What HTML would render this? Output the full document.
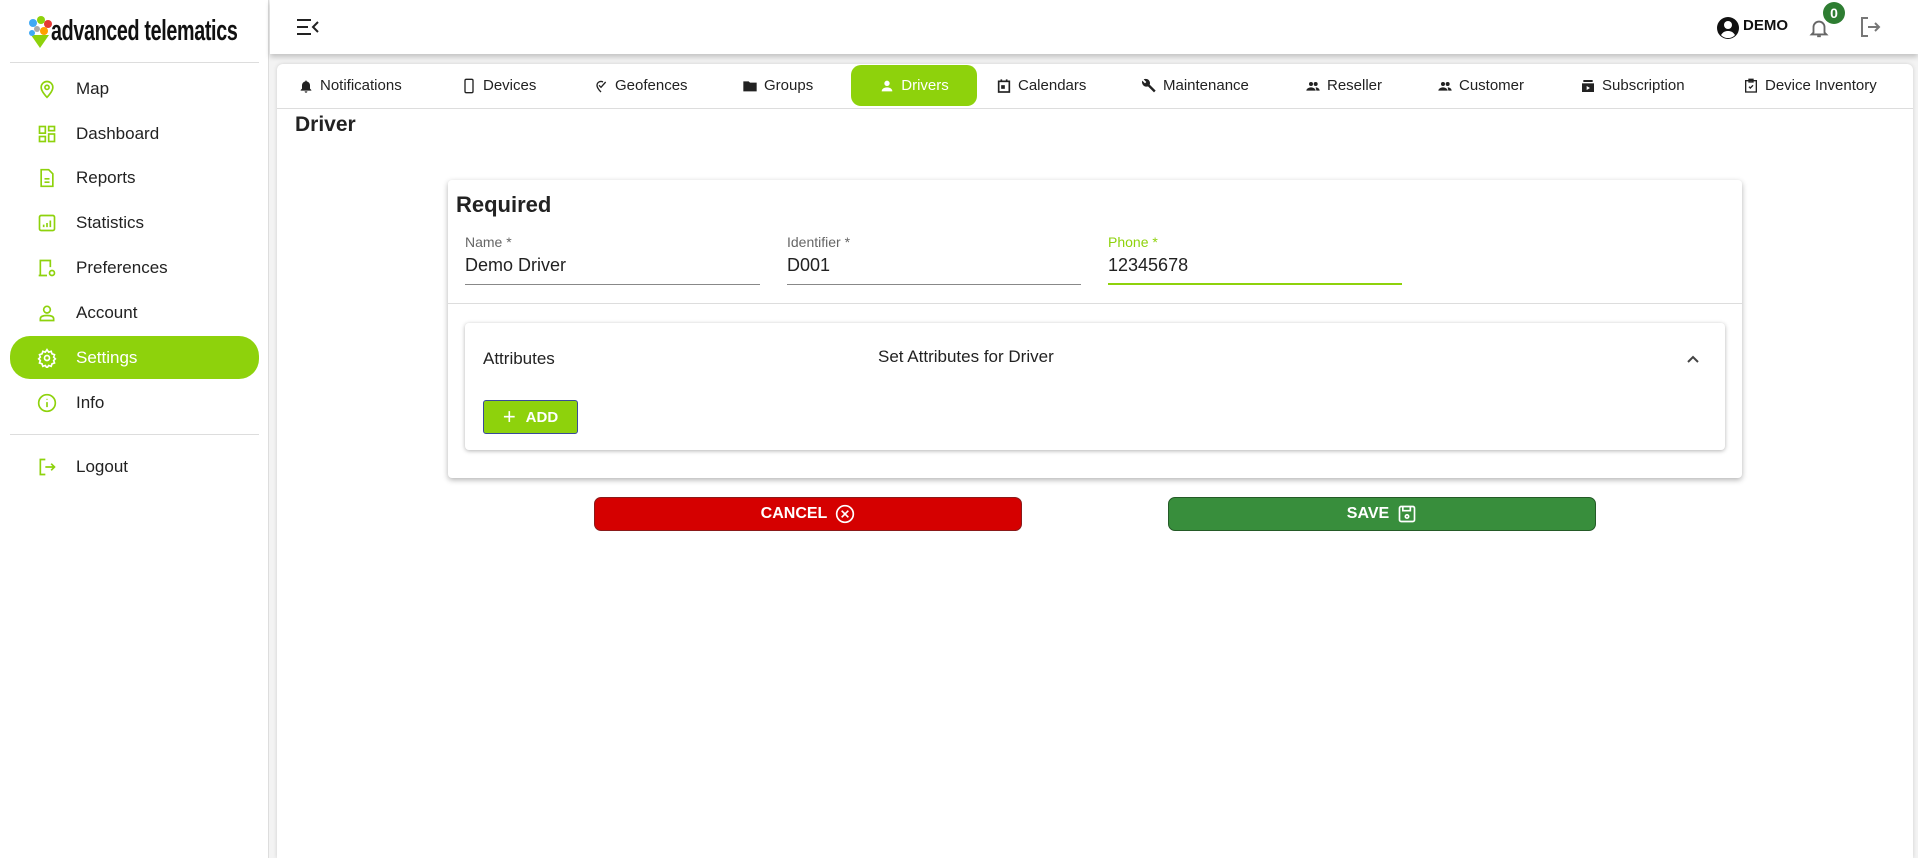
<!DOCTYPE html>
<html><head><meta charset="utf-8">
<style>
*{box-sizing:border-box;margin:0;padding:0}
body{width:1918px;height:858px;overflow:hidden;background:#f3f3f3;font-family:"Liberation Sans",sans-serif;color:#222;position:relative}
.abs{position:absolute}
#side{left:0;top:0;width:269px;height:858px;background:#fff;border-right:1px solid #ddd}
.nav{position:absolute;left:10px;width:249px;height:43px;display:flex;align-items:center;font-size:17px;color:#222}
.nav svg{position:absolute;left:27px;width:20px;height:20px}
.nav span{position:absolute;left:66px}
.nav.act{background:#8ed20c;color:#fff;border-radius:20px}
#top{left:270px;top:0;width:1648px;height:54px;background:#fff;box-shadow:0 3px 5px rgba(0,0,0,.2)}
#card{left:277px;top:64px;width:1636px;height:794px;background:#fff;border-radius:6px 6px 0 0;box-shadow:0 0 4px rgba(0,0,0,.15)}
.tab{position:absolute;top:65px;height:41px;display:flex;align-items:center;font-size:15px;color:#222}
.tab svg{width:16px;height:16px;margin-right:6px}
.tab.act{background:#8ed20c;color:#fff;border-radius:10px;justify-content:center}
.lbl{font-size:14px;color:#666}
.val{font-size:18px;color:#222}
.btn{position:absolute;height:34px;border-radius:7px;color:#fff;font-weight:bold;font-size:16px;display:flex;align-items:center;justify-content:center;gap:8px}
</style></head><body>
<div id="side" class="abs">
  <svg class="abs" style="left:27px;top:15px" width="26" height="34" viewBox="0 0 26 34">
    <path d="M4 20 L13 33 L22 20 Z" fill="#8ed20c"/>
    <circle cx="6" cy="8" r="4" fill="#3fa9f5"/><circle cx="14" cy="5" r="4" fill="#8ed20c"/><circle cx="21" cy="9" r="4" fill="#e53935"/>
    <circle cx="10" cy="14" r="3" fill="#aaa"/><circle cx="17" cy="16" r="4" fill="#ffa000"/><circle cx="5" cy="18" r="3" fill="#3fa9f5"/>
  </svg>
  <div class="abs" style="left:51px;top:14px;font-size:29px;font-weight:bold;letter-spacing:-0.5px;color:#111;white-space:nowrap;transform:scaleX(0.68);transform-origin:left;line-height:34px">advanced telematics</div>
  <div class="abs" style="left:10px;top:62px;width:249px;height:1px;background:#ddd"></div>
  <div class="nav" style="top:67px"><svg viewBox="0 0 24 24" fill="none" stroke="#8ed20c" stroke-width="2"><path d="M12 22s-7-7-7-12a7 7 0 0114 0c0 5-7 12-7 12z"/><circle cx="12" cy="10" r="2.5"/></svg><span>Map</span></div>
  <div class="nav" style="top:112px"><svg viewBox="0 0 24 24" fill="none" stroke="#8ed20c" stroke-width="2"><rect x="3" y="3" width="7" height="8"/><rect x="14" y="3" width="7" height="5"/><rect x="3" y="15" width="7" height="6"/><rect x="14" y="12" width="7" height="9"/></svg><span>Dashboard</span></div>
  <div class="nav" style="top:156px"><svg viewBox="0 0 24 24" fill="none" stroke="#8ed20c" stroke-width="2"><path d="M5 2h9l5 5v15H5z"/><path d="M9 13h6M9 17h6"/></svg><span>Reports</span></div>
  <div class="nav" style="top:201px"><svg viewBox="0 0 24 24" fill="none" stroke="#8ed20c" stroke-width="2"><rect x="3" y="3" width="18" height="18" rx="2"/><path d="M8 17v-3M12 17v-5M16 17v-8"/></svg><span>Statistics</span></div>
  <div class="nav" style="top:246px"><svg viewBox="0 0 24 24" fill="none" stroke="#8ed20c" stroke-width="2"><path d="M4 21V3h12v8M2 21h10"/><circle cx="18" cy="18" r="3"/></svg><span>Preferences</span></div>
  <div class="nav" style="top:291px"><svg viewBox="0 0 24 24" fill="none" stroke="#8ed20c" stroke-width="2"><circle cx="12" cy="8" r="4"/><path d="M4 21v-2c0-3 4-4 8-4s8 1 8 4v2z"/></svg><span>Account</span></div>
  <div class="nav act" style="top:336px"><svg viewBox="0 0 24 24" fill="none" stroke="#fff" stroke-width="2"><circle cx="12" cy="12" r="3"/><path d="M12 2l2 3 3-1 1 3 3 1-1 3 2 2-2 2 1 3-3 1-1 3-3-1-2 3-2-3-3 1-1-3-3-1 1-3-2-2 2-2-1-3 3-1 1-3 3 1z"/></svg><span>Settings</span></div>
  <div class="nav" style="top:381px"><svg viewBox="0 0 24 24" fill="none" stroke="#8ed20c" stroke-width="2"><circle cx="12" cy="12" r="10"/><path d="M12 11v6M12 7v1"/></svg><span>Info</span></div>
  <div class="abs" style="left:10px;top:434px;width:249px;height:1px;background:#ddd"></div>
  <div class="nav" style="top:445px"><svg viewBox="0 0 24 24" fill="none" stroke="#8ed20c" stroke-width="2"><path d="M10 3H4v18h6M10 12h11M17 8l4 4-4 4"/></svg><span>Logout</span></div>
</div>
<div id="top" class="abs">
  <svg class="abs" style="left:27px;top:18px" width="22" height="18" viewBox="0 0 22 18" stroke="#222" stroke-width="2" fill="none"><path d="M0 2h14M0 9h11M0 16h14M21 4l-5 5 5 5"/></svg>
  <svg class="abs" style="left:1446px;top:16px" width="24" height="24" viewBox="0 0 24 24"><circle cx="12" cy="12" r="11" fill="#111"/><circle cx="12" cy="9" r="4" fill="#fff"/><path d="M5 19c2-3 4-4 7-4s5 1 7 4c-2 2-4 3-7 3s-5-1-7-3z" fill="#fff"/></svg>
  <div class="abs" style="left:1473px;top:17px;font-weight:bold;font-size:15px;color:#111">DEMO</div>
  <svg class="abs" style="left:1538px;top:16px" width="22" height="24" viewBox="0 0 24 24" fill="none" stroke="#666" stroke-width="2"><path d="M6 17V11a6 6 0 0112 0v6l2 2H4z"/><path d="M10 21h4"/></svg>
  <div class="abs" style="left:1553px;top:2px;width:22px;height:22px;border-radius:50%;background:#2e7d32;color:#fff;font-weight:bold;font-size:14px;text-align:center;line-height:22px">0</div>
  <svg class="abs" style="left:1588px;top:15px" width="24" height="24" viewBox="0 0 24 24" fill="none" stroke="#777" stroke-width="2"><path d="M10 3H4v18h6M10 12h11M17 8l4 4-4 4"/></svg>
</div>
<div id="card" class="abs"></div>
<div class="abs" style="left:277px;top:108px;width:1636px;height:1px;background:#ddd"></div>
<div class="tab" style="left:298px"><svg viewBox="0 0 24 24" fill="#222"><path d="M12 22a2 2 0 002-2h-4a2 2 0 002 2zm6-6V11a6 6 0 00-5-6V4h-2v1a6 6 0 00-5 6v5l-2 2v1h16v-1z"/></svg>Notifications</div>
<div class="tab" style="left:461px"><svg viewBox="0 0 24 24" fill="none" stroke="#222" stroke-width="2"><rect x="6" y="2" width="12" height="20" rx="2"/></svg>Devices</div>
<div class="tab" style="left:593px"><svg viewBox="0 0 24 24" fill="none" stroke="#222" stroke-width="2"><path d="M12 21s-6-6-6-10a6 6 0 019-5M9 11l3 3 7-8"/></svg>Geofences</div>
<div class="tab" style="left:742px"><svg viewBox="0 0 24 24" fill="#222"><path d="M2 5h8l2 2h10v13H2z"/></svg>Groups</div>
<div class="tab act" style="left:851px;width:126px"><svg viewBox="0 0 24 24" fill="#fff"><circle cx="12" cy="8" r="4"/><path d="M4 20c0-4 4-6 8-6s8 2 8 6z"/></svg>Drivers</div>
<div class="tab" style="left:996px"><svg viewBox="0 0 24 24" fill="none" stroke="#222" stroke-width="2.5"><rect x="4" y="5" width="16" height="16"/><path d="M8 2v4M16 2v4"/><rect x="9" y="12" width="3" height="3" fill="#222"/></svg>Calendars</div>
<div class="tab" style="left:1141px"><svg viewBox="0 0 24 24" fill="#222"><path d="M22 19l-9-9c1-2 .5-5-1.5-7S6 1 4 2l4 4-2 2-4-4c-1 2-.5 5 1.5 7s5 2.5 7 1.5l9 9z"/></svg>Maintenance</div>
<div class="tab" style="left:1305px"><svg viewBox="0 0 24 24" fill="#222"><circle cx="9" cy="9" r="3"/><circle cx="16" cy="9" r="3"/><path d="M2 19c0-3 4-5 7-5s7 2 7 5zM16 14c3 0 6 2 6 5h-5z"/></svg>Reseller</div>
<div class="tab" style="left:1437px"><svg viewBox="0 0 24 24" fill="#222"><circle cx="9" cy="9" r="3"/><circle cx="16" cy="9" r="3"/><path d="M2 19c0-3 4-5 7-5s7 2 7 5zM16 14c3 0 6 2 6 5h-5z"/></svg>Customer</div>
<div class="tab" style="left:1580px"><svg viewBox="0 0 24 24" fill="#222"><rect x="5" y="3" width="14" height="3"/><rect x="3" y="8" width="18" height="13"/><path d="M10 12l5 3-5 3z" fill="#fff"/></svg>Subscription</div>
<div class="tab" style="left:1743px"><svg viewBox="0 0 24 24" fill="none" stroke="#222" stroke-width="2"><rect x="4" y="4" width="16" height="17"/><path d="M9 2h6v4H9zM9 13l2 2 4-4"/></svg>Device Inventory</div>
<div class="abs" style="left:295px;top:113px;font-size:21px;font-weight:bold;color:#222">Driver</div>

<div class="abs" style="left:448px;top:180px;width:1294px;height:298px;background:#fff;border-radius:4px;box-shadow:0 2px 6px rgba(0,0,0,.3)"></div>
<div class="abs" style="left:456px;top:192px;font-size:22px;font-weight:bold;color:#222">Required</div>
<div class="abs lbl" style="left:465px;top:234px">Name *</div>
<div class="abs val" style="left:465px;top:255px">Demo Driver</div>
<div class="abs" style="left:465px;top:284px;width:295px;height:1px;background:#888"></div>
<div class="abs lbl" style="left:787px;top:234px">Identifier *</div>
<div class="abs val" style="left:787px;top:255px">D001</div>
<div class="abs" style="left:787px;top:284px;width:294px;height:1px;background:#888"></div>
<div class="abs lbl" style="left:1108px;top:234px;color:#8ed20c">Phone *</div>
<div class="abs val" style="left:1108px;top:255px">12345678</div>
<div class="abs" style="left:1108px;top:283px;width:294px;height:2px;background:#8ed20c"></div>
<div class="abs" style="left:448px;top:303px;width:1294px;height:1px;background:#ddd"></div>

<div class="abs" style="left:465px;top:323px;width:1260px;height:127px;background:#fff;border-radius:4px;box-shadow:0 1px 4px rgba(0,0,0,.3)"></div>
<div class="abs" style="left:483px;top:349px;font-size:17px;color:#222">Attributes</div>
<div class="abs" style="left:878px;top:347px;font-size:17px;color:#222">Set Attributes for Driver</div>
<svg class="abs" style="left:1686px;top:354px" width="14" height="10" viewBox="0 0 14 10" fill="none" stroke="#444" stroke-width="2"><path d="M2 8l5-5 5 5"/></svg>
<div class="abs" style="left:483px;top:400px;width:95px;height:34px;background:#8ed20c;border:1px solid #3a4a9a;border-radius:3px;color:#fff;font-weight:bold;font-size:15px;display:flex;align-items:center;justify-content:center;gap:10px"><span style="font-size:22px;font-weight:normal;line-height:1">+</span>ADD</div>

<div class="btn" style="left:594px;top:497px;width:428px;background:#d50000;border:1px solid #8a1a1a">CANCEL <svg width="20" height="20" viewBox="0 0 24 24" fill="none" stroke="#fff" stroke-width="2"><circle cx="12" cy="12" r="10"/><path d="M8 8l8 8M16 8l-8 8"/></svg></div>
<div class="btn" style="left:1168px;top:497px;width:428px;background:#388e3c;border:1px solid #245a27">SAVE <svg width="20" height="20" viewBox="0 0 24 24" fill="none" stroke="#fff" stroke-width="2"><rect x="3" y="3" width="18" height="18" rx="2"/><path d="M7 3v5h9V3"/><circle cx="12" cy="15" r="2"/></svg></div>
</body></html>
